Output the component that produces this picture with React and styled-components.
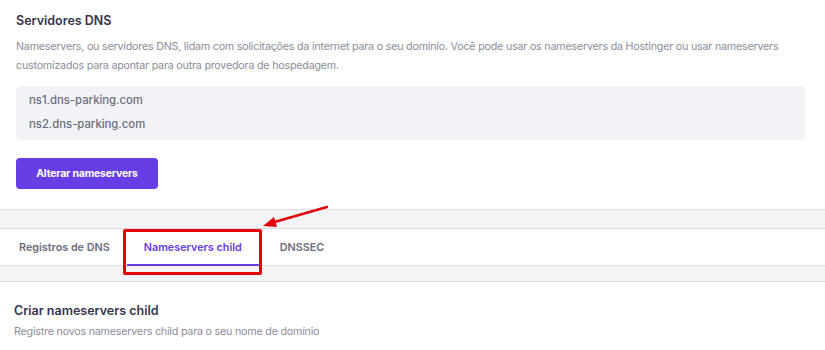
import React, { useState } from 'react'
import styled, { createGlobalStyle } from 'styled-components'

const GlobalStyle = createGlobalStyle`
  html, body {
    margin: 0;
    padding: 0;
    background: #f4f4f6;
  }
  body {
    font-family: Inter, 'Noto Sans', sans-serif;
  }
`

const Page = styled.div`
  width: 825px;
  height: 350px;
  overflow: hidden;
  position: relative;
  background: #f4f4f6;
`

const Card = styled.section`
  background: #fff;
  padding: ${(p) => p.$pad || '13px 16px 20px'};
  border-bottom: 1px solid #dcdce0;
`

const Title = styled.h3`
  margin: 0 0 ${(p) => p.$mb || 8}px;
  font-size: 12.5px;
  font-weight: 600;
  color: #36344d;
  line-height: 16px;
`

const Desc = styled.p`
  margin: 0;
  font-size: 10.7px;
  line-height: 19px;
  color: #8c8c9a;
  letter-spacing: -0.2px;
  white-space: nowrap;
`

const NsBox = styled.div`
  margin-top: 11px;
  margin-right: 4px;
  background: #f2f3f6;
  border-radius: 5px;
  padding: 2px 13px 4px;
  display: flex;
  flex-direction: column;
`

const NsItem = styled.div`
  font-size: 11.3px;
  font-weight: 500;
  color: #6d6e7d;
  line-height: 24px;
`

const Button = styled.button`
  margin-top: 18px;
  height: 31px;
  width: 142px;
  border: none;
  border-radius: 4px;
  background: #673de6;
  color: #fff;
  font-family: inherit;
  font-size: 10.5px;
  font-weight: 700;
  letter-spacing: -0.2px;
  cursor: pointer;
`

const Strip = styled.div`
  height: ${(p) => p.$h}px;
  background: #f4f4f6;
  border-bottom: 1px solid #dcdce0;
`

const TabBar = styled.nav`
  background: #fff;
  height: 36px;
  display: flex;
  align-items: stretch;
  padding-left: 2px;
  border-bottom: 1px solid #dcdce0;
`

const Tab = styled.button`
  position: relative;
  border: none;
  background: none;
  font-family: inherit;
  font-size: 10.8px;
  font-weight: 600;
  padding: 0 ${(p) => p.$pad || 17}px;
  color: ${(p) => (p.$active ? '#673de6' : '#6d6e7d')};
  cursor: pointer;
  &::after {
    content: '';
    position: absolute;
    left: 0;
    right: 0;
    bottom: -1px;
    height: 2px;
    background: ${(p) => (p.$active ? '#673de6' : 'transparent')};
  }
`

const Highlight = styled.div`
  position: absolute;
  left: 123px;
  top: 229px;
  width: 133px;
  height: 40px;
  border: 3px solid #e3020b;
  border-radius: 2px;
  pointer-events: none;
`

const Arrow = styled.svg`
  position: absolute;
  left: 255px;
  top: 200px;
  pointer-events: none;
`

const tabs = [
  { id: 'dns', label: 'Registros de DNS' },
  { id: 'child', label: 'Nameservers child' },
  { id: 'sec', label: 'DNSSEC', pad: 21 },
]

export default function App() {
  const [active, setActive] = useState('child')

  return (
    <Page>
      <GlobalStyle />
      <Card>
        <Title>Servidores DNS</Title>
        <Desc>
          Nameservers, ou servidores DNS, lidam com solicitações da internet para o seu domínio. Você pode usar os
          nameservers da Hostinger ou usar nameservers
          <br />
          customizados para apontar para outra provedora de hospedagem.
        </Desc>
        <NsBox>
          <NsItem>ns1.dns-parking.com</NsItem>
          <NsItem>ns2.dns-parking.com</NsItem>
        </NsBox>
        <Button>Alterar nameservers</Button>
      </Card>
      <Strip $h={18} />
      <TabBar>
        {tabs.map((t) => (
          <Tab key={t.id} $active={active === t.id} $pad={t.pad} onClick={() => setActive(t.id)}>
            {t.label}
          </Tab>
        ))}
      </TabBar>
      <Strip $h={15} />
      <Card $pad="21px 14px 20px">
        <Title $mb={3}>Criar nameservers child</Title>
        <Desc>Registre novos nameservers child para o seu nome de domínio</Desc>
      </Card>
      <Highlight />
      <Arrow width="80" height="32" viewBox="0 0 80 32">
        <line x1="72" y1="7" x2="16" y2="23" stroke="#e3020b" strokeWidth="2.5" strokeLinecap="round" />
        <polygon points="8,26 19,17 22,27" fill="#e3020b" />
      </Arrow>
    </Page>
  )
}
